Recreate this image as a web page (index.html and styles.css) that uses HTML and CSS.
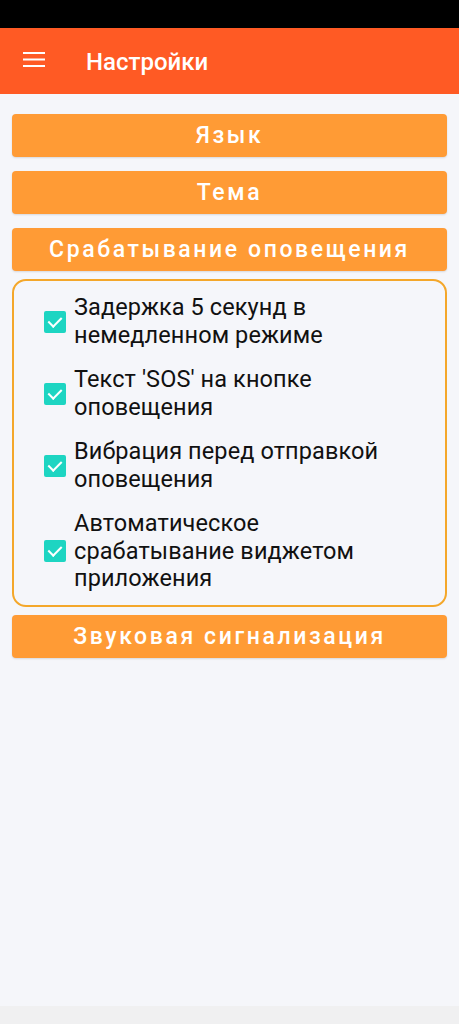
FILE: index.html
```html
<!DOCTYPE html>
<html lang="ru">
<head>
  <meta charset="UTF-8">
  <meta name="viewport" content="width=device-width, initial-scale=1.0">
  <title>Настройки</title>
  <link rel="stylesheet" href="styles.css">
</head>
<body>
  <div class="status-bar"></div>

  <!-- Top app bar -->
  <header class="app-bar">
    <button class="menu-btn" aria-label="Меню">
      <svg width="24" height="24" viewBox="0 0 24 24">
        <path d="M1 3h22M1 9.5h22M1 16h22" stroke="#fff" stroke-width="2.2" fill="none"/>
      </svg>
    </button>
    <h1 class="app-title">Настройки</h1>
  </header>

  <main class="settings">
    <button class="section-btn">Язык</button>
    <button class="section-btn">Тема</button>
    <button class="section-btn">Срабатывание оповещения</button>

    <div class="options-box">
      <label class="option">
        <input type="checkbox" checked>
        <span class="check"></span>
        <span class="option-text">Задержка 5 секунд в немедленном режиме</span>
      </label>
      <label class="option">
        <input type="checkbox" checked>
        <span class="check"></span>
        <span class="option-text">Текст 'SOS' на кнопке оповещения</span>
      </label>
      <label class="option">
        <input type="checkbox" checked>
        <span class="check"></span>
        <span class="option-text">Вибрация перед отправкой оповещения</span>
      </label>
      <label class="option">
        <input type="checkbox" checked>
        <span class="check"></span>
        <span class="option-text">Автоматическое срабатывание виджетом приложения</span>
      </label>
    </div>

    <button class="section-btn">Звуковая сигнализация</button>
  </main>

  <div class="nav-bar"></div>
</body>
</html>
```

FILE: styles.css
```css
* {
  box-sizing: border-box;
}
body {
  font-family: 'Roboto', 'Noto Sans', sans-serif;
  margin: 0;
  padding: 0;
  background-color: #f5f6fa;
  color: #111;
  height: 1024px;
  display: flex;
  flex-direction: column;
  overflow: hidden;
}
.status-bar {
  height: 28px;
  background: #000;
  flex-shrink: 0;
}
.app-bar {
  height: 66px;
  background: #ff5a24;
  display: flex;
  align-items: center;
  padding-left: 22px;
  flex-shrink: 0;
}
.menu-btn {
  background: none;
  border: none;
  padding: 0;
  width: 24px;
  height: 24px;
  margin-top: 2px;
}
.app-title {
  margin: 2px 0 0 40px;
  color: #fff;
  font-size: 24px;
  font-weight: 500;
  letter-spacing: 0;
}
.settings {
  flex: 1;
  padding: 20px 12px 0;
  display: flex;
  flex-direction: column;
  gap: 14px;
}
.section-btn {
  height: 43px;
  width: 100%;
  background: #ff9b35;
  border: none;
  border-radius: 4px;
  color: #fff;
  font-family: inherit;
  font-size: 23px;
  font-weight: 500;
  letter-spacing: 2.6px;
  box-shadow: 0 1px 2px rgba(0, 0, 0, 0.12);
}
.options-box {
  margin-top: -6px;
  margin-bottom: -6px;
  border: 2px solid #f4a72a;
  border-radius: 14px;
  padding: 13px 50px 12px 30px;
  display: flex;
  flex-direction: column;
  gap: 17px;
}
.option {
  display: flex;
  align-items: center;
  gap: 8px;
}
.option input {
  display: none;
}
.check {
  width: 22px;
  height: 22px;
  border-radius: 2px;
  background: #1dd5c2;
  flex-shrink: 0;
  position: relative;
}
.check::after {
  content: '';
  position: absolute;
  left: 7px;
  top: 3px;
  width: 6px;
  height: 11px;
  border: solid #fff;
  border-width: 0 2px 2px 0;
  transform: rotate(45deg);
}
.option-text {
  font-size: 23.5px;
  line-height: 27.5px;
  letter-spacing: 0.1px;
  color: #111;
}
.nav-bar {
  height: 18px;
  background: #f0f0f1;
  flex-shrink: 0;
}
```
